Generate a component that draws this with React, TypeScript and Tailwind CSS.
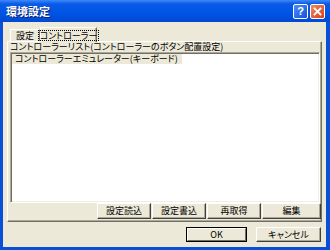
import React from "react";

function Btn({ w, h, label, def }: { w: string; h: string; label: string; def?: boolean }) {
  if (def) {
    return (
      <div className={`${w} ${h} border border-black flex`}>
        <div className="flex-1 flex items-center justify-center bg-[#ece9d8] border-t border-l border-white border-r border-b border-r-[#716f64] border-b-[#716f64]">
          <span className="whitespace-nowrap">{label}</span>
        </div>
      </div>
    );
  }
  return (
    <div
      className={`${w} ${h} flex items-center justify-center bg-[#ece9d8] border-t border-l border-white border-r border-b border-r-[#404040] border-b-[#404040] shadow-[inset_-1px_-1px_#aca899]`}
    >
      <span className="whitespace-nowrap">{label}</span>
    </div>
  );
}

export default function App() {
  return (
    <div className="w-[330px] h-[250px] bg-[#0a4fd8] flex flex-col font-['Noto_Sans_CJK_JP',sans-serif] [font-feature-settings:'palt'] text-[9px] leading-[10px] text-black">
      <div className="h-[22px] shrink-0 flex items-center pl-[6px] pr-[5px] bg-[linear-gradient(#3d8af7_0%,#0a5ae8_18%,#0054e3_60%,#0049d4_100%)]">
        <span className="text-white font-bold text-[11px] leading-[12px] [text-shadow:1px_1px_#0a1e6e]">環境設定</span>
        <div className="ml-auto flex gap-[2px] mt-[1px]">
          <div className="w-[15px] h-[15px] rounded-[2px] border border-white bg-[linear-gradient(135deg,#4d8ef8,#1452d8)] flex items-center justify-center">
            <span className="text-white font-bold text-[11px] leading-[11px] font-['Liberation_Sans',sans-serif]">?</span>
          </div>
          <div className="w-[15px] h-[15px] rounded-[2px] border border-white bg-[linear-gradient(135deg,#ef8a63,#d8401a)] flex items-center justify-center">
            <svg width="9" height="9" viewBox="0 0 9 9">
              <path d="M1.5 1.5 L7.5 7.5 M7.5 1.5 L1.5 7.5" stroke="white" strokeWidth="1.8" strokeLinecap="square" />
            </svg>
          </div>
        </div>
      </div>
      <div className="flex-1 ml-[3px] mr-[4px] mb-[3px] bg-[#ece9d8] flex flex-col">
        <div className="h-[19px] shrink-0 flex items-end pl-[7px]">
          <div className="w-[30px] h-[12px] border-t border-l border-white border-r border-r-[#716f64] flex items-center justify-center">
            <span className="whitespace-nowrap">設定</span>
          </div>
          <div className="w-[57px] h-[15px] -mb-px relative z-10 bg-[#ece9d8] border-t border-l border-white border-r border-r-[#716f64] shadow-[inset_-1px_0_#aca899] flex items-center justify-center">
            <span className="whitespace-nowrap border border-dotted border-black px-[1px] leading-[9px]">コントローラー</span>
          </div>
        </div>
        <div className="ml-[4px] mr-[4px] border-t border-l border-white border-r border-b border-r-[#716f64] border-b-[#716f64] shadow-[inset_-1px_-1px_#aca899] flex flex-col pb-[2px]">
          <div className="h-[10px] pl-[2px] whitespace-nowrap">コントローラーリスト(コントローラーのボタン配置設定)</div>
          <div className="h-[151px] ml-[2px] mr-[1px] bg-white border-t border-l border-[#aca899] border-r border-b border-r-white border-b-white shadow-[inset_1px_1px_#716f64,inset_-1px_-1px_#f1efe2] p-[1px]">
            <div className="w-fit h-[10px] bg-[#ece9d8] pl-[3px] pr-[4px] whitespace-nowrap">コントローラーエミュレーター(キーボード)</div>
          </div>
          <div className="h-[16px] flex justify-end gap-[1px]">
            <Btn w="w-[54px]" h="h-[16px]" label="設定読込" />
            <Btn w="w-[54px]" h="h-[16px]" label="設定書込" />
            <Btn w="w-[54px]" h="h-[16px]" label="再取得" />
            <Btn w="w-[59px]" h="h-[16px]" label="編集" />
          </div>
        </div>
        <div className="flex justify-end gap-[9px] mt-[5px] pr-[5px]">
          <Btn w="w-[61px]" h="h-[15px]" label="OK" def />
          <Btn w="w-[65px]" h="h-[15px]" label="キャンセル" />
        </div>
      </div>
    </div>
  );
}
